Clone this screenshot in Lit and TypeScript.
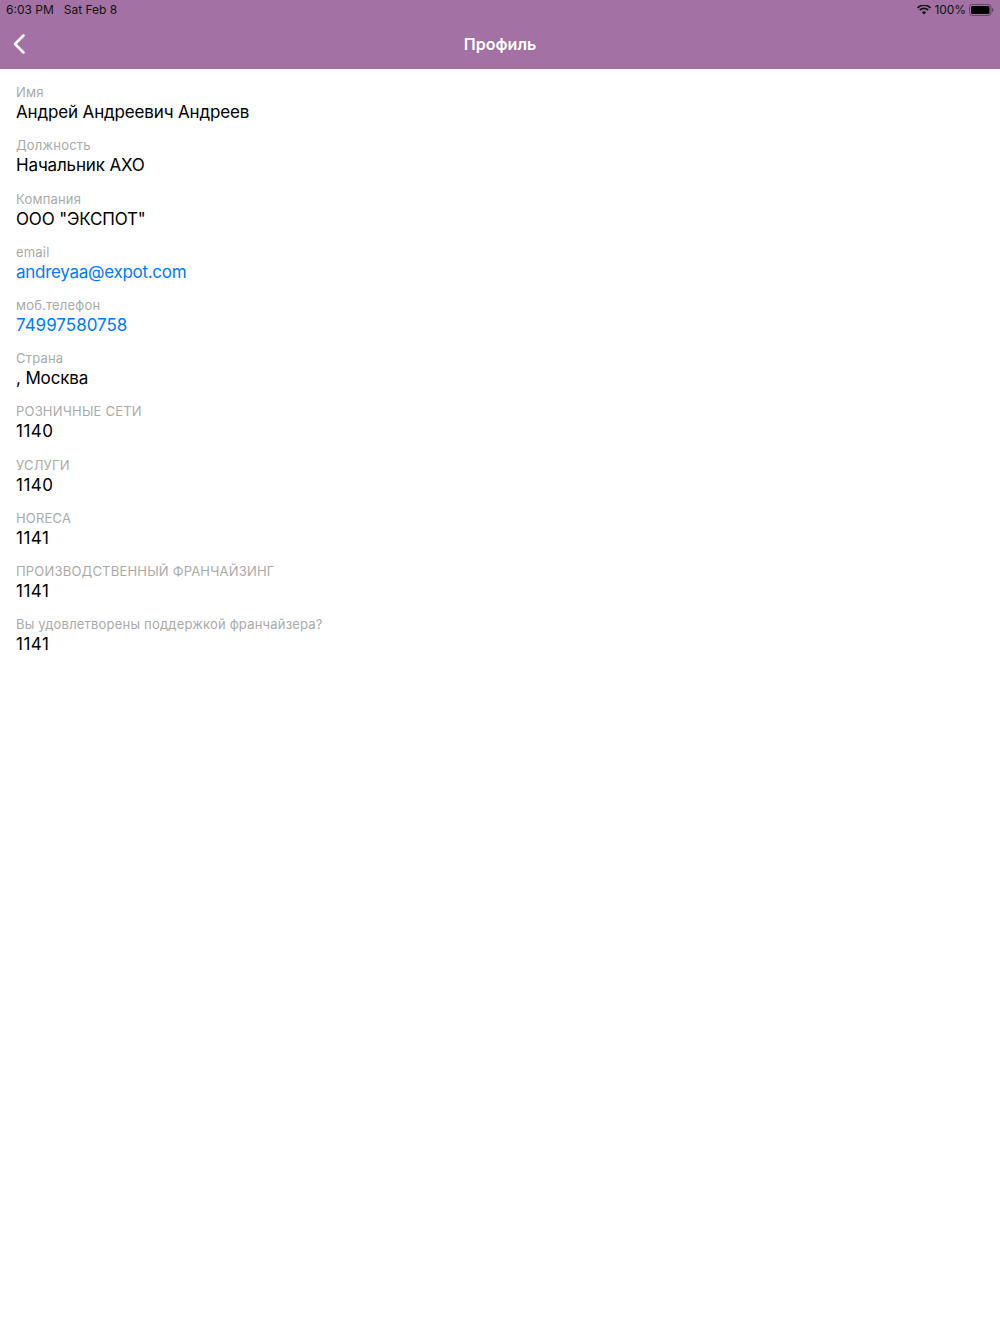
import { LitElement, html, css, svg } from "lit";
import { customElement } from "lit/decorators.js";

const rows: [string, string, boolean?][] = [
  ["Имя", "Андрей Андреевич Андреев"],
  ["Должность", "Начальник АХО"],
  ["Компания", 'ООО "ЭКСПОТ"'],
  ["email", "andreyaa@expot.com", true],
  ["моб.телефон", "74997580758", true],
  ["Страна", ", Москва"],
  ["РОЗНИЧНЫЕ СЕТИ", "1140"],
  ["УСЛУГИ", "1140"],
  ["HORECA", "1141"],
  ["ПРОИЗВОДСТВЕННЫЙ ФРАНЧАЙЗИНГ", "1141"],
  ["Вы удовлетворены поддержкой франчайзера?", "1141"],
];

@customElement("app-root")
export class AppRoot extends LitElement {
  static styles = css`
    :host {
      display: block;
      min-height: 1334px;
      background: #fff;
      font-family: Inter, "Liberation Sans", sans-serif;
    }
    .head {
      background: #a371a3;
      height: 69px;
      display: flex;
      flex-direction: column;
    }
    .status {
      height: 19px;
      display: flex;
      align-items: center;
      padding: 0 6px;
      font-size: 12px;
      color: #111;
    }
    .date { margin-left: 10px; }
    .spacer { flex: 1; }
    .pct { margin: 0 3px 0 3px; letter-spacing: -0.05px; }
    .wifi, .batt { display: block; }
    .nav {
      height: 50px;
      display: flex;
      align-items: center;
      justify-content: center;
      position: relative;
      color: #fff;
      font-size: 16px;
      font-weight: 600;
    }
    .back {
      position: absolute;
      left: 12px;
      top: 14px;
    }
    .list {
      padding: 16.2px 16px 0;
      display: flex;
      flex-direction: column;
      gap: 14.2px;
    }
    .label {
      font-size: 13px;
      line-height: 15px;
      letter-spacing: 0.2px;
      color: #aaaaaa;
    }
    .value {
      font-size: 17px;
      line-height: 24px;
      letter-spacing: -0.15px;
      color: #000;
    }
    .num { letter-spacing: 0.5px; }
    .link { color: #007aff; letter-spacing: -0.28px; }
    .link.num { letter-spacing: 0; }
  `;

  render() {
    return html`
      <div class="head">
        <div class="status">
          <span>6:03 PM</span><span class="date">Sat Feb 8</span>
          <span class="spacer"></span>
          <svg class="wifi" width="14" height="10" viewBox="0 0 14 10">
            ${svg`<path d="M7 9.6 4.9 7.3a3 3 0 0 1 4.2 0zM3.4 5.8l-1.2-1.3a7 7 0 0 1 9.6 0l-1.2 1.3a5.2 5.2 0 0 0-7.2 0zM1.1 3.4 0 2.2a10 10 0 0 1 14 0l-1.1 1.2a8.4 8.4 0 0 0-11.8 0z" fill="#111"/>`}
          </svg>
          <span class="pct">100%</span>
          <svg class="batt" width="25" height="12" viewBox="0 0 25 12">
            ${svg`<rect x="0.5" y="0.5" width="21.5" height="11" rx="3" fill="none" stroke="#111" stroke-opacity=".45"/>
            <rect x="2" y="2" width="18.5" height="8" rx="1.5" fill="#000"/>
            <path d="M23 4v4c.8-.3 1.4-1 1.4-2s-.6-1.700-1.400-2z" fill="#111" fill-opacity=".5"/>`}
          </svg>
        </div>
        <div class="nav">
          <svg class="back" width="14" height="22" viewBox="0 0 14 22">
            ${svg`<path d="M11.500 2.500 3 11l8.500 8.500" fill="none" stroke="#fff" stroke-width="2.600" stroke-linecap="round" stroke-linejoin="round"/>`}
          </svg>
          Профиль
        </div>
      </div>
      <div class="list">
        ${rows.map(
          ([l, v, link]) => html`<div>
            <div class="label">${l}</div>
            <div class="value ${link ? "link" : ""} ${/^\d+$/.test(v) ? "num" : ""}">${v}</div>
          </div>`
        )}
      </div>
    `;
  }
}
